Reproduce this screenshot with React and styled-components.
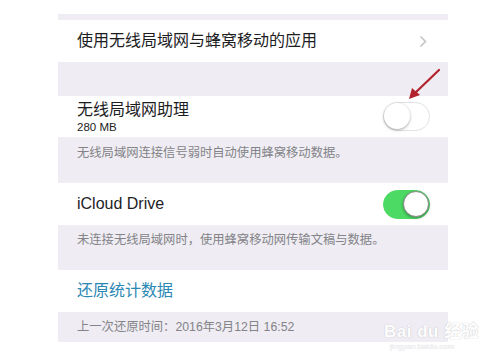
import React from "react";
import styled, { createGlobalStyle } from "styled-components";

const Global = createGlobalStyle`
  html, body {
    margin: 0;
    padding: 0;
    background: #ffffff;
  }
  body {
    font-family: "Liberation Sans", "Noto Sans CJK SC", sans-serif;
  }
`;

const Page = styled.div`
  position: relative;
  width: 500px;
  height: 359px;
  overflow: hidden;
  background: #fff;
  padding-top: 14px;
  box-sizing: border-box;
`;

const Panel = styled.div`
  width: 390px;
  margin-left: 58px;
  display: flex;
  flex-direction: column;
`;

const Gap = styled.div`
  height: ${(p) => p.h}px;
  background: #efedf3;
`;

const Row = styled.div`
  height: ${(p) => p.h || 42}px;
  background: #fff;
  display: flex;
  align-items: center;
  justify-content: space-between;
  padding: 0 18px 0 19px;
  box-sizing: border-box;
`;

const Label = styled.div`
  display: flex;
  flex-direction: column;
`;

const Title = styled.span`
  font-size: 16px;
  color: ${(p) => (p.link ? "#2b87b3" : "#1d1d1f")};
  line-height: 20px;
`;

const Sub = styled.span`
  font-size: 11.5px;
  color: #222;
  line-height: 13px;
  margin-top: 1px;
`;

const Footer = styled.div`
  height: ${(p) => p.h}px;
  background: #efedf3;
  padding: ${(p) => p.pt}px 19px 0;
  box-sizing: border-box;
  font-size: 12.3px;
  color: #838388;
  line-height: 16px;
`;

const Chevron = styled.svg`
  margin-right: 3px;
`;

const Track = styled.div`
  position: relative;
  width: 47px;
  height: 29px;
  border-radius: 15px;
  box-sizing: border-box;
  background: ${(p) => (p.on ? "#4cd964" : "#fff")};
  border: 1.5px solid ${(p) => (p.on ? "#4cd964" : "#e2e2e6")};
`;

const Knob = styled.div`
  position: absolute;
  top: 0;
  ${(p) => (p.on ? "right: 0;" : "left: 0;")}
  width: 26px;
  height: 26px;
  border-radius: 50%;
  background: #fff;
  box-shadow: 0 1px 3px rgba(0, 0, 0, 0.35);
  ${(p) => (p.on ? "border: 1px solid #8a8a8a; box-sizing: border-box;" : "")}
`;

const Toggle = ({ on }) => (
  <Track on={on ? 1 : 0}>
    <Knob on={on ? 1 : 0} />
  </Track>
);

const Arrow = styled.svg`
  position: absolute;
  left: 404px;
  top: 66px;
`;

const Watermark = styled.div`
  position: absolute;
  left: 384px;
  top: 309px;
  display: flex;
  flex-direction: column;
  align-items: flex-start;
  color: #fff;
  opacity: 0.9;
`;

const Mark = styled.span`
  font-size: 17px;
  font-weight: bold;
  letter-spacing: 0.5px;
  text-shadow: 0 0 1px #c8c6cc, 0 0 1px #c8c6cc;
  margin-top: 8px;
`;

const Url = styled.span`
  font-size: 8px;
  color: #f0eff2;
  text-shadow: 0 0 1px #d8d6dc;
  margin-left: 6px;
`;

export default function App() {
  return (
    <Page>
      <Global />
      <Panel>
        <Gap h={6} />
        <Row>
          <Title>使用无线局域网与蜂窝移动的应用</Title>
          <Chevron width="8" height="13" viewBox="0 0 8 13">
            <polyline points="1.5,1.5 6.5,6.5 1.5,11.5" fill="none" stroke="#c4c4c9" strokeWidth="1.6" />
          </Chevron>
        </Row>
        <Gap h={34} />
        <Row h={41}>
          <Label>
            <Title>无线局域网助理</Title>
            <Sub>280 MB</Sub>
          </Label>
          <Toggle />
        </Row>
        <Footer h={46} pt={8}>无线局域网连接信号弱时自动使用蜂窝移动数据。</Footer>
        <Row>
          <Title>iCloud Drive</Title>
          <Toggle on />
        </Row>
        <Footer h={45} pt={7}>未连接无线局域网时，使用蜂窝移动网传输文稿与数据。</Footer>
        <Row>
          <Title link>还原统计数据</Title>
        </Row>
        <Footer h={30} pt={7}>上一次还原时间：2016年3月12日 16:52</Footer>
      </Panel>

      <Arrow width="40" height="36" viewBox="0 0 40 36">
        <line x1="35" y1="4" x2="10" y2="28" stroke="#b3232d" strokeWidth="2.2" strokeLinecap="round" />
        <polygon points="5,33 8,22 16,29" fill="#b3232d" />
      </Arrow>

      <Watermark>
        <Mark>Bai du 经验</Mark>
        <Url>jingyan.baidu.com</Url>
      </Watermark>
    </Page>
  );
}
